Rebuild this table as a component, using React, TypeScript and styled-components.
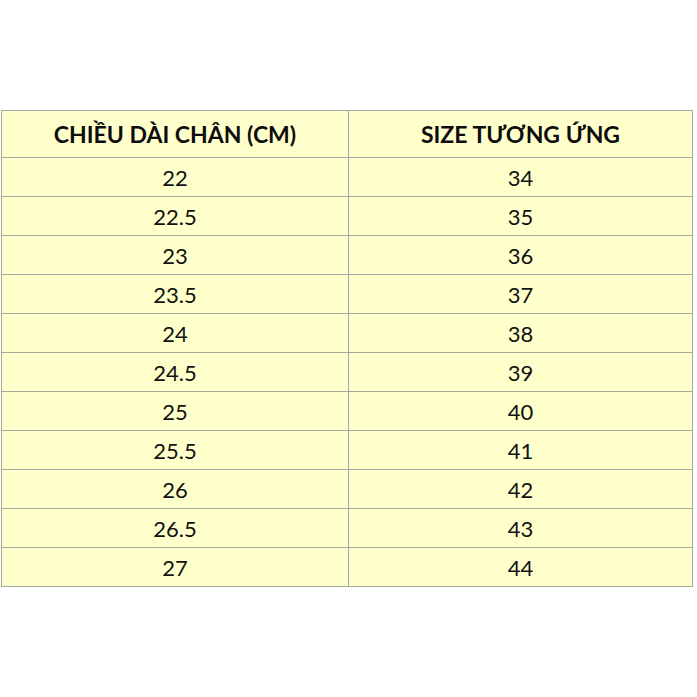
import styled, { createGlobalStyle } from 'styled-components';

const GlobalStyle = createGlobalStyle`
  html, body {
    margin: 0;
    padding: 0;
    background: #ffffff;
  }
  body {
    font-family: Lato, "Open Sans", "Noto Sans", sans-serif;
  }
`;

const rows: [string, string][] = [
  ['22', '34'],
  ['22.5', '35'],
  ['23', '36'],
  ['23.5', '37'],
  ['24', '38'],
  ['24.5', '39'],
  ['25', '40'],
  ['25.5', '41'],
  ['26', '42'],
  ['26.5', '43'],
  ['27', '44'],
];

export default function App() {
  return (
    <>
      <GlobalStyle />
      <Page>
        <SizeTable>
          <colgroup>
            <col style={{ width: 347 }} />
            <col style={{ width: 344 }} />
          </colgroup>
          <thead>
            <tr>
              <HeadCell>CHIỀU DÀI CHÂN (CM)</HeadCell>
              <HeadCell>SIZE TƯƠNG ỨNG</HeadCell>
            </tr>
          </thead>
          <tbody>
            {rows.map(([length, size]) => (
              <tr key={length}>
                <Cell>{length}</Cell>
                <Cell>{size}</Cell>
              </tr>
            ))}
          </tbody>
        </SizeTable>
      </Page>
    </>
  );
}

const Page = styled.div`
  width: 697px;
  height: 697px;
  padding: 110px 0 0 1px;
  box-sizing: border-box;
`;

const SizeTable = styled.table`
  width: 692px;
  border-collapse: collapse;
  table-layout: fixed;
  background: #ffffcc;
`;

const HeadCell = styled.th`
  height: 46px;
  padding: 0;
  border: 1px solid #a8a8a0;
  font-size: 23px;
  font-weight: 700;
  color: #0d0d0d;
  text-align: center;
  vertical-align: middle;
`;

const Cell = styled.td`
  height: 38px;
  padding: 0;
  border: 1px solid #a8a8a0;
  font-size: 22px;
  font-weight: 400;
  color: #111111;
  text-align: center;
  vertical-align: middle;
`;
